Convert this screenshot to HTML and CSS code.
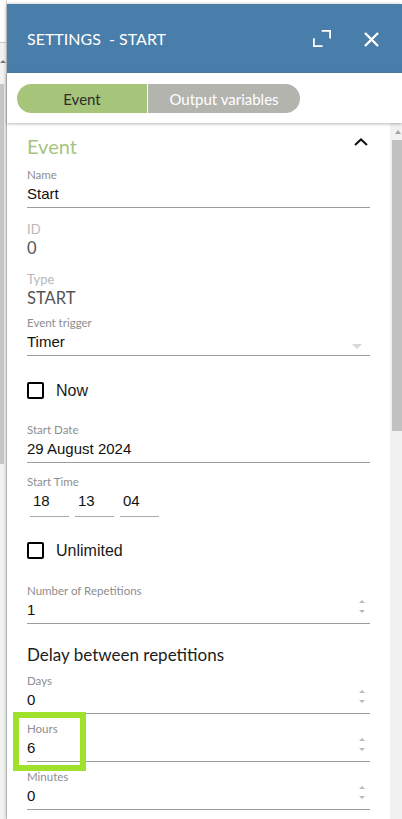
FILE: index.html
```html
<!DOCTYPE html>
<html lang="en">
<head>
<meta charset="utf-8">
<title>Settings - Start</title>
<link rel="stylesheet" href="styles.css">
</head>
<body>
<div class="app">
  <aside class="bg-strip">
    <div class="bg-top"></div>
    <div class="bg-arrow"></div>
    <div class="bg-thumb"></div>
  </aside>
  <div class="panel">
    <header class="panel-head">
      <h1 class="panel-title">SETTINGS&nbsp; - START</h1>
      <div class="head-actions">
        <svg class="icon-max" width="18" height="18" viewBox="0 0 18 18" aria-hidden="true">
          <path d="M8.7 0.9H17.1V8.5M0.9 8.2V16.1H9.6" fill="none" stroke="#fff" stroke-width="1.8"/>
        </svg>
        <svg class="icon-close" width="15" height="15" viewBox="0 0 15 15" aria-hidden="true">
          <path d="M1 1L14 14M14 1L1 14" fill="none" stroke="#fff" stroke-width="2.4"/>
        </svg>
      </div>
    </header>
    <nav class="tabs">
      <div class="tab-pill">
        <span class="tab tab-active">Event</span>
        <span class="tab tab-other">Output variables</span>
      </div>
    </nav>
    <div class="panel-body">
      <div class="content">
        <div class="section-head">
          <h2 class="section-title">Event</h2>
          <svg class="chevron" width="14" height="8" viewBox="0 0 14 8" aria-hidden="true">
            <path d="M1 7L7 1.4L13 7" fill="none" stroke="#111" stroke-width="2"/>
          </svg>
        </div>

        <div class="field field-name">
          <div class="field-label">Name</div>
          <div class="field-input">Start</div>
        </div>

        <div class="static static-id">
          <div class="static-label">ID</div>
          <div class="static-value">0</div>
        </div>
        <div class="static static-type">
          <div class="static-label">Type</div>
          <div class="static-value">START</div>
        </div>

        <div class="field">
          <div class="field-label">Event trigger</div>
          <div class="field-input">
            <span class="value-text">Timer</span>
            <span class="select-arrow"></span>
          </div>
        </div>

        <div class="check-row check-now">
          <span class="checkbox"></span>
          <span class="check-label">Now</span>
        </div>

        <div class="field field-date">
          <div class="field-label">Start Date</div>
          <div class="field-input">29 August 2024</div>
        </div>

        <div class="time-field">
          <div class="field-label">Start Time</div>
          <div class="time-row">
            <div class="time-input">18</div>
            <div class="time-input">13</div>
            <div class="time-input">04</div>
          </div>
        </div>

        <div class="check-row check-unlimited">
          <span class="checkbox"></span>
          <span class="check-label">Unlimited</span>
        </div>

        <div class="field field-number">
          <div class="field-label">Number of Repetitions</div>
          <div class="field-input">
            <span class="value-text">1</span>
            <span class="spinner"><span class="spin-up"></span><span class="spin-down"></span></span>
          </div>
        </div>

        <h3 class="subheading">Delay between repetitions</h3>

        <div class="field">
          <div class="field-label">Days</div>
          <div class="field-input">
            <span class="value-text">0</span>
            <span class="spinner"><span class="spin-up"></span><span class="spin-down"></span></span>
          </div>
        </div>

        <div class="field field-hours">
          <div class="highlight"></div>
          <div class="field-label">Hours</div>
          <div class="field-input">
            <span class="value-text">6</span>
            <span class="spinner"><span class="spin-up"></span><span class="spin-down"></span></span>
          </div>
        </div>

        <div class="field">
          <div class="field-label">Minutes</div>
          <div class="field-input">
            <span class="value-text">0</span>
            <span class="spinner"><span class="spin-up"></span><span class="spin-down"></span></span>
          </div>
        </div>
      </div>
      <div class="scrollbar">
        <div class="sb-arrow"></div>
        <div class="sb-thumb"></div>
      </div>
    </div>
  </div>
</div>
</body>
</html>
```
FILE: styles.css
```css
* { box-sizing: border-box; }
html, body {
  margin: 0;
  padding: 0;
  height: 819px;
  overflow: hidden;
  background: #ffffff;
}
.app {
  display: flex;
  height: 819px;
  font-family: Lato, "Liberation Sans", sans-serif;
}

/* page behind the panel */
.bg-strip {
  width: 7px;
  flex: none;
  display: flex;
  flex-direction: column;
  background: #f2f2f2;
  border-right: 1px solid #d6d6d6;
}
.bg-top {
  height: 43px;
  background: #ffffff;
  border-bottom: 1px solid #c8c8c8;
}
.bg-arrow {
  width: 0;
  height: 0;
  margin: 17px 0 0 0;
  border-left: 3px solid transparent;
  border-right: 3px solid transparent;
  border-bottom: 3px solid #777;
}
.bg-thumb {
  width: 4px;
  height: 380px;
  margin-top: 21px;
  background: #c6c6c6;
}

/* panel */
.panel {
  flex: 1;
  margin-top: 4px;
  display: flex;
  flex-direction: column;
  min-width: 0;
  box-shadow: -1px 0 3px rgba(0,0,0,0.25);
  background: #fff;
}
.panel-head {
  height: 69px;
  flex: none;
  background: #4a7eaa;
  display: flex;
  align-items: center;
  padding: 0 23px 0 20px;
}
.panel-title {
  margin: 0;
  flex: 1;
  font-family: Lato, "Liberation Sans", sans-serif;
  font-weight: 400;
  font-size: 16px;
  line-height: 20px;
  color: #ffffff;
}
.head-actions {
  display: flex;
  align-items: center;
  gap: 33px;
  padding-top: 1px;
}
.icon-max, .icon-close { display: block; }

.tabs {
  height: 50px;
  flex: none;
  padding: 11px 0 0 10px;
  background: #fff;
  position: relative;
  z-index: 2;
  box-shadow: 0 1px 3px rgba(0,0,0,0.28);
}
.tab-pill {
  display: flex;
  width: 283px;
  height: 29px;
  border-radius: 15px;
  overflow: hidden;
  gap: 1px;
  background: #fff;
}
.tab {
  display: flex;
  align-items: center;
  justify-content: center;
  font-size: 15px;
  line-height: 20px;
}
.tab-active {
  width: 130px;
  background: #a7c47b;
  color: #2c2c2c;
}
.tab-other {
  flex: 1;
  background: #b4b4af;
  color: #ffffff;
}

.panel-body {
  flex: 1;
  display: flex;
  min-height: 0;
  overflow: hidden;
}
.content {
  flex: 1;
  padding: 11px 20px 0 20px;
  background: #fff;
}
.scrollbar {
  width: 12px;
  flex: none;
  background: #f1f1f1;
  display: flex;
  flex-direction: column;
  align-items: flex-end;
}
.sb-arrow {
  width: 0;
  height: 0;
  margin: 7px 1px 0 0;
  border-left: 3px solid transparent;
  border-right: 3px solid transparent;
  border-bottom: 4px solid #a3a3a3;
}
.sb-thumb {
  width: 10px;
  height: 291px;
  margin-top: 6px;
  background: #c1c1c1;
}

/* section header */
.section-head {
  display: flex;
  align-items: flex-start;
  justify-content: space-between;
  height: 24px;
  margin-bottom: 10px;
}
.section-title {
  margin: 0;
  font-size: 20px;
  line-height: 24px;
  font-weight: 400;
  color: #a6c47f;
}
.chevron {
  display: block;
  margin: 4px 2px 0 0;
}

/* text fields */
.field {
  margin-bottom: 8px;
  position: relative;
}
.field-name { margin-bottom: 13px; }
.field-date { margin-bottom: 12px; }
.field-number { margin-bottom: 21px; }
.field-label {
  height: 14px;
  font-size: 11.5px;
  line-height: 14px;
  color: #8e8e8e;
}
.field-input {
  display: flex;
  align-items: center;
  height: 26px;
  padding: 2px 0 3px;
  border-bottom: 1px solid #9c9c9c;
  font-family: "Liberation Sans", Arial, sans-serif;
  font-size: 15px;
  line-height: 20px;
  color: #111;
}
.value-text { flex: 1; }
.select-arrow {
  width: 0;
  height: 0;
  align-self: flex-end;
  margin: 0 8px 3px 0;
  border-left: 5px solid transparent;
  border-right: 5px solid transparent;
  border-top: 5px solid #d8d8d8;
}
.spinner {
  display: flex;
  flex-direction: column;
  align-self: flex-start;
  gap: 7px;
  margin: 0 5px 0 0;
}
.spin-up, .spin-down {
  display: block;
  width: 0;
  height: 0;
  border-left: 3px solid transparent;
  border-right: 3px solid transparent;
}
.spin-up { border-bottom: 3px solid #b9b9b9; }
.spin-down { border-top: 3px solid #b9b9b9; }

/* static fields */
.static { margin-bottom: 13px; }
.static-type { margin-bottom: 8px; }
.static-label {
  font-size: 13px;
  line-height: 17px;
  color: #b8b8b8;
}
.static-value {
  font-size: 16.5px;
  line-height: 20px;
  color: #555;
}

/* checkbox */
.check-row {
  display: flex;
  align-items: center;
  height: 17px;
}
.check-now { margin: 26px 0 24px; }
.check-unlimited { margin: 25px 0 25px; }
.checkbox {
  width: 17px;
  height: 17px;
  border: 2px solid #000;
  border-radius: 2px;
  flex: none;
}
.check-label {
  margin-left: 12px;
  padding-top: 1px;
  font-family: "Liberation Sans", Arial, sans-serif;
  font-size: 16px;
  line-height: 20px;
  color: #1a1a1a;
}

/* time */
.time-row {
  display: flex;
  gap: 6px;
  margin-left: 3px;
}
.time-input {
  width: 39px;
  height: 28px;
  padding: 2px 0 5px 3px;
  border-bottom: 1px solid #aaaaaa;
  font-family: "Liberation Sans", Arial, sans-serif;
  font-size: 15px;
  line-height: 20px;
  color: #111;
}

.subheading {
  margin: 0 0 9px;
  font-size: 17px;
  line-height: 20px;
  font-weight: 400;
  color: #1c1c1c;
}

.highlight {
  position: absolute;
  left: -14px;
  top: -10px;
  width: 73px;
  height: 59px;
  border: 6px solid #a0e22b;
  pointer-events: none;
}
```
